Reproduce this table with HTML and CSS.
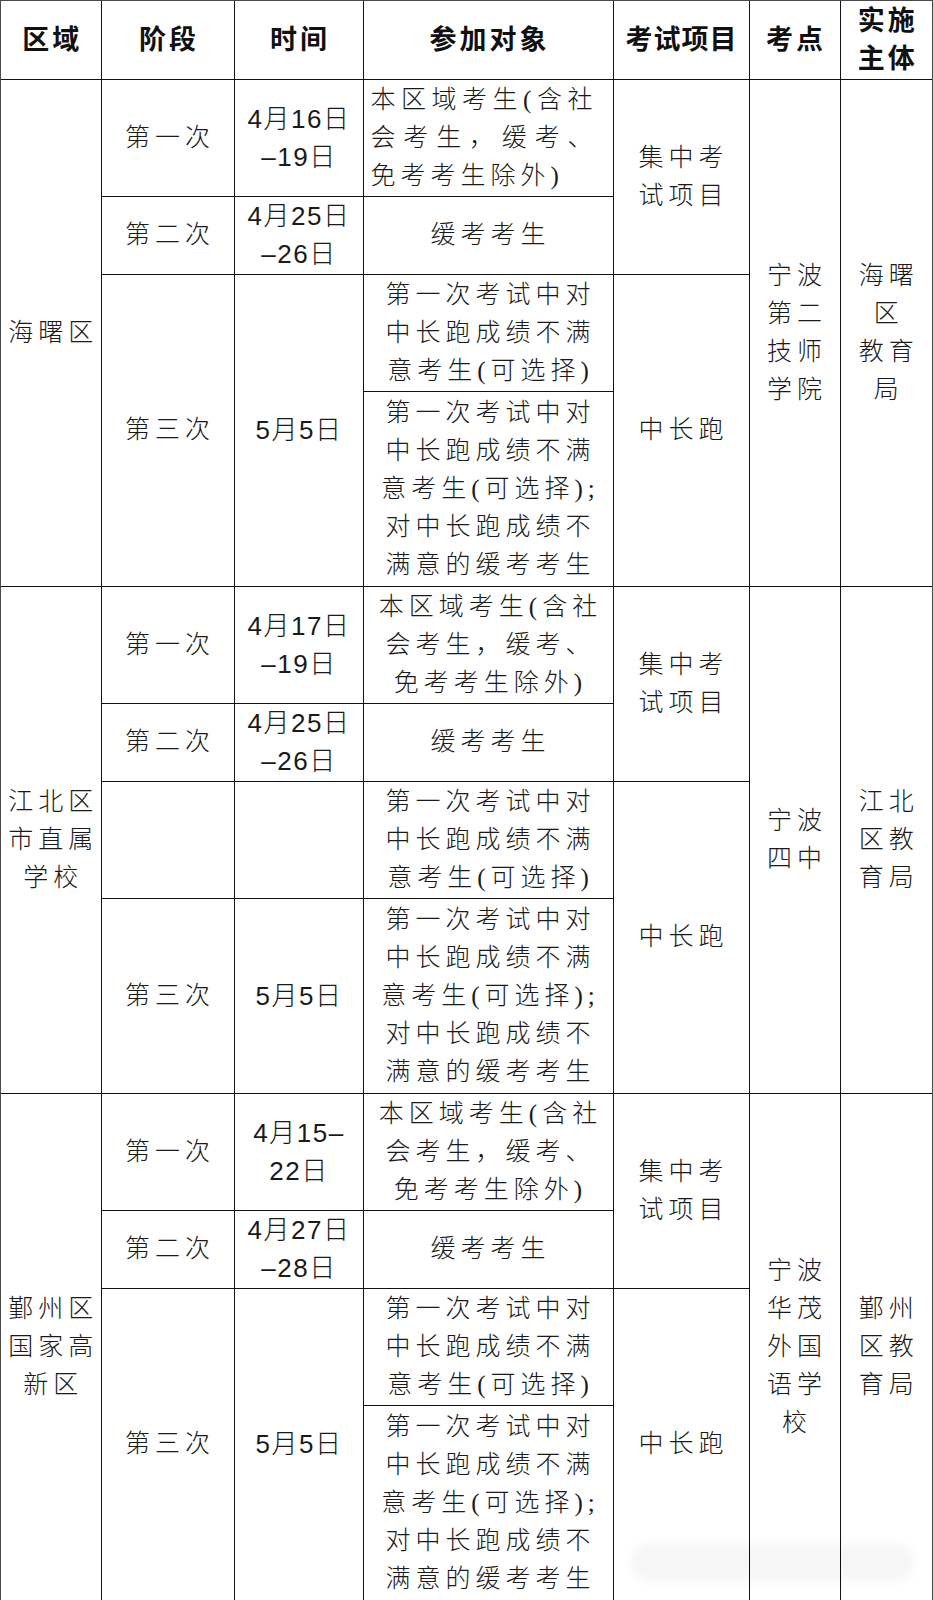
FILE: index.html
```html
<!DOCTYPE html>
<html lang="zh-CN">
<head>
<meta charset="utf-8">
<title>考试安排</title>
<link rel="stylesheet" href="styles.css">
</head>
<body>
<div class="frame">
<table class="sched">
  <colgroup>
    <col class="c-area"><col class="c-stage"><col class="c-time"><col class="c-who"><col class="c-item"><col class="c-site"><col class="c-org">
  </colgroup>
  <thead>
    <tr class="r-head">
      <th>区域</th><th>阶段</th><th>时间</th><th>参加对象</th><th class="tight">考试项目</th><th>考点</th><th>实施<br>主体</th>
    </tr>
  </thead>
  <tbody>
    <!-- 海曙区 -->
    <tr class="r-a">
      <td rowspan="4">海曙区</td>
      <td>第一次</td>
      <td class="time">4月16日<br>–19日</td>
      <td class="who-just"><span class="jl">本区域考生(含社</span><span class="jl">会考生，缓考、</span><span class="ll">免考考生除外)</span></td>
      <td rowspan="2">集中考<br>试项目</td>
      <td rowspan="4">宁波<br>第二<br>技师<br>学院</td>
      <td rowspan="4">海曙<br>区<br>教育<br>局</td>
    </tr>
    <tr class="r-b">
      <td>第二次</td>
      <td class="time">4月25日<br>–26日</td>
      <td>缓考考生</td>
    </tr>
    <tr class="r-c">
      <td rowspan="2">第三次</td>
      <td rowspan="2" class="time">5月5日</td>
      <td>第一次考试中对<br>中长跑成绩不满<br>意考生(可选择)</td>
      <td rowspan="2">中长跑</td>
    </tr>
    <tr class="r-d">
      <td>第一次考试中对<br>中长跑成绩不满<br>意考生(可选择);<br>对中长跑成绩不<br>满意的缓考考生</td>
    </tr>

    <!-- 江北区 -->
    <tr class="r-a">
      <td rowspan="4">江北区<br>市直属<br>学校</td>
      <td>第一次</td>
      <td class="time">4月17日<br>–19日</td>
      <td>本区域考生(含社<br>会考生，缓考、<br>免考考生除外)</td>
      <td rowspan="2">集中考<br>试项目</td>
      <td rowspan="4">宁波<br>四中</td>
      <td rowspan="4">江北<br>区教<br>育局</td>
    </tr>
    <tr class="r-b">
      <td>第二次</td>
      <td class="time">4月25日<br>–26日</td>
      <td>缓考考生</td>
    </tr>
    <tr class="r-c">
      <td></td>
      <td class="time"></td>
      <td>第一次考试中对<br>中长跑成绩不满<br>意考生(可选择)</td>
      <td rowspan="2">中长跑</td>
    </tr>
    <tr class="r-d">
      <td>第三次</td>
      <td class="time">5月5日</td>
      <td>第一次考试中对<br>中长跑成绩不满<br>意考生(可选择);<br>对中长跑成绩不<br>满意的缓考考生</td>
    </tr>

    <!-- 鄞州区 -->
    <tr class="r-a">
      <td rowspan="4">鄞州区<br>国家高<br>新区</td>
      <td>第一次</td>
      <td class="time">4月15–<br>22日</td>
      <td>本区域考生(含社<br>会考生，缓考、<br>免考考生除外)</td>
      <td rowspan="2">集中考<br>试项目</td>
      <td rowspan="4">宁波<br>华茂<br>外国<br>语学<br>校</td>
      <td rowspan="4">鄞州<br>区教<br>育局</td>
    </tr>
    <tr class="r-b">
      <td>第二次</td>
      <td class="time">4月27日<br>–28日</td>
      <td>缓考考生</td>
    </tr>
    <tr class="r-c">
      <td rowspan="2">第三次</td>
      <td rowspan="2" class="time">5月5日</td>
      <td>第一次考试中对<br>中长跑成绩不满<br>意考生(可选择)</td>
      <td rowspan="2">中长跑</td>
    </tr>
    <tr class="r-d">
      <td>第一次考试中对<br>中长跑成绩不满<br>意考生(可选择);<br>对中长跑成绩不<br>满意的缓考考生</td>
    </tr>
  </tbody>
</table>
<div class="watermark"></div>
</div>
</body>
</html>
```

FILE: styles.css
```css
html, body {
  margin: 0;
  padding: 0;
  background: #ffffff;
}

.frame {
  position: relative;
  width: 931px;
  border: 1px solid #4a4a4a;
}

.sched {
  width: 931px;
  border-collapse: collapse;
  border-style: hidden;
  table-layout: fixed;
  font-family: "Liberation Serif", "Noto Sans CJK SC", serif;
  font-size: 25px;
  font-weight: 300;
  line-height: 38px;
  color: #1a1a1a;
}

.c-area  { width: 100px; }
.c-stage { width: 133px; }
.c-time  { width: 129px; }
.c-who   { width: 250px; }
.c-item  { width: 136px; }
.c-site  { width: 91px; }
.c-org   { width: 92px; }

.sched th,
.sched td {
  border: 1px solid #111111;
  padding: 0 0 0 5px;
  text-align: center;
  vertical-align: middle;
  letter-spacing: 5px;
  white-space: nowrap;
}

.sched th {
  font-size: 27px;
  font-weight: 700;
  letter-spacing: 3px;
  padding-left: 3px;
  color: #111111;
}

.sched th.tight {
  letter-spacing: 1px;
  padding-left: 1px;
}

.r-head { height: 78px; }
.r-a { height: 117px; }
.r-b { height: 78px; }
.r-c { height: 117px; }
.r-d { height: 195px; }

.sched td.time {
  font-family: "Liberation Sans", "Noto Sans CJK SC", sans-serif;
  font-size: 26px;
  letter-spacing: 1.5px;
  padding-left: 1px;
}

.sched td.who-just {
  text-align: left;
  padding-left: 7px;
}

.who-just .jl,
.who-just .ll {
  display: block;
  width: 222px;
}

.who-just .jl {
  text-align: justify;
  text-align-last: justify;
  letter-spacing: 0;
}

.watermark {
  position: absolute;
  left: 630px;
  top: 1543px;
  width: 283px;
  height: 37px;
  border-radius: 18px;
  background: rgba(0, 0, 0, 0.035);
  filter: blur(4px);
  pointer-events: none;
}
```
